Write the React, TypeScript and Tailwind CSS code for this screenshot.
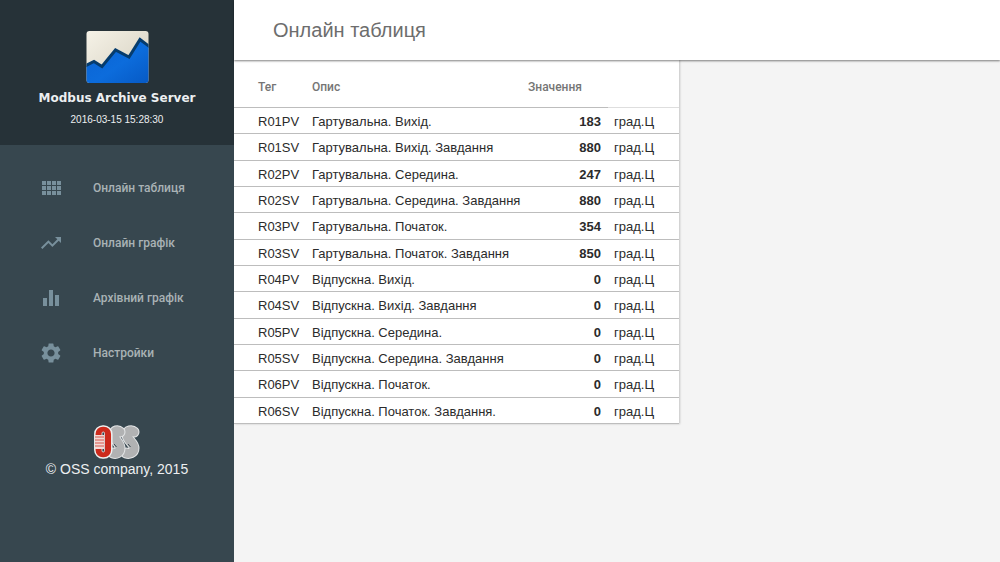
import React, { useState } from "react";
import { MdEqualizer, MdSettings, MdTrendingUp } from "react-icons/md";

interface ITag {
  tag: string;
  description: string;
  value: number;
}

const UNIT = "град.Ц";

const tags: ITag[] = [
  { tag: "R01PV", description: "Гартувальна. Вихід.", value: 183 },
  { tag: "R01SV", description: "Гартувальна. Вихід. Завдання", value: 880 },
  { tag: "R02PV", description: "Гартувальна. Середина.", value: 247 },
  { tag: "R02SV", description: "Гартувальна. Середина. Завдання", value: 880 },
  { tag: "R03PV", description: "Гартувальна. Початок.", value: 354 },
  { tag: "R03SV", description: "Гартувальна. Початок. Завдання", value: 850 },
  { tag: "R04PV", description: "Відпускна. Вихід.", value: 0 },
  { tag: "R04SV", description: "Відпускна. Вихід. Завдання", value: 0 },
  { tag: "R05PV", description: "Відпускна. Середина.", value: 0 },
  { tag: "R05SV", description: "Відпускна. Середина. Завдання", value: 0 },
  { tag: "R06PV", description: "Відпускна. Початок.", value: 0 },
  { tag: "R06SV", description: "Відпускна. Початок. Завдання.", value: 0 },
];

const GridIcon = () => (
  <svg viewBox="0 0 24 24" width="24" height="24" fill="currentColor">
    <path d="M3 9h4V5H3v4zm0 5h4v-4H3v4zm5 0h4v-4H8v4zm5 0h4v-4h-4v4zM8 9h4V5H8v4zm5-4v4h4V5h-4zm5 9h4v-4h-4v4zM3 19h4v-4H3v4zm5 0h4v-4H8v4zm5 0h4v-4h-4v4zm5 0h4v-4h-4v4zm0-14v4h4V5h-4z" />
  </svg>
);

const menu = [
  { id: "table", label: "Онлайн таблиця", icon: <GridIcon /> },
  { id: "chart", label: "Онлайн графік", icon: <MdTrendingUp size={24} /> },
  { id: "archive", label: "Архівний графік", icon: <MdEqualizer size={24} /> },
  { id: "settings", label: "Настройки", icon: <MdSettings size={24} /> },
];

const ServerLogo = () => (
  <svg viewBox="0 0 63 54" width="63" height="54" aria-hidden="true">
    <defs>
      <linearGradient id="paper" x1="0" y1="0" x2="1" y2="1">
        <stop offset="0" stopColor="#f6f3e8" />
        <stop offset="1" stopColor="#d3cdbd" />
      </linearGradient>
      <linearGradient id="area" x1="0" y1="0" x2="1" y2="1">
        <stop offset="0" stopColor="#0a62d2" />
        <stop offset="0.55" stopColor="#0c6cdc" />
        <stop offset="1" stopColor="#0659c4" />
      </linearGradient>
      <clipPath id="frame">
        <rect x="0.5" y="1" width="62" height="52" rx="3" />
      </clipPath>
    </defs>
    <g clipPath="url(#frame)">
      <rect width="63" height="54" fill="url(#paper)" />
      <path d="M0 36L8 32L16 36.5L29.5 20L43 27L54 10L63 17V54H0z" fill="url(#area)" />
      <path d="M-1 36L8 31.5L16 36.5L29.5 20L43 27L54 9.5L64 17" fill="none" stroke="#063c6d" strokeWidth="3" />
    </g>
  </svg>
);

const CompanyLogo = () => (
  <svg viewBox="0 0 46 34" width="46" height="34" fill="none" aria-hidden="true">
    {/* Grey letters, right one first, each with a light rim */}
    <path d="M40 7C38 5 33 5 33 10C33 15 40 18 40 23C40 28 35 29 32 28" stroke="#e4e6e7" strokeWidth="11" strokeLinecap="round" />
    <path d="M40 7C38 5 33 5 33 10C33 15 40 18 40 23C40 28 35 29 32 28" stroke="#b1b2b3" strokeWidth="9" strokeLinecap="round" />
    <path d="M26 7C24 5 20 5 20 10C20 15 26 18 26 23C26 28 22 29 19 28" stroke="#e4e6e7" strokeWidth="11" strokeLinecap="round" />
    <path d="M26 7C24 5 20 5 20 10C20 15 26 18 26 23C26 28 22 29 19 28" stroke="#b1b2b3" strokeWidth="9" strokeLinecap="round" />
    <path d="M20 19l2.5 3M34 19l2.5 3" stroke="#37474f" strokeWidth="1" />
    <rect x="0.8" y="1" width="17" height="32" rx="8" fill="#cc2a1c" stroke="#eef0f0" strokeWidth="1.5" />
    <rect x="8" y="7" width="2.5" height="20" rx="1.2" fill="#37474f" stroke="#eef0f0" strokeWidth="0.8" />
    <rect x="1" y="10" width="9" height="14" fill="#f3d9d6" />
    <path d="M1 12h9M1 15h9M1 18h9M1 21h9" stroke="#d4574c" />
  </svg>
);

const App = () => {
  const [active, setActive] = useState("table");

  return (
    <div className="flex min-h-screen bg-[#f4f4f4] font-['Liberation_Sans',Arial,sans-serif]">
      {/* Sidebar */}
      <aside className="flex w-[234px] shrink-0 flex-col bg-[#37474f]">
        <div className="flex h-[145px] flex-col items-center bg-[#263238] pt-[30px] text-[#eceff1]">
          <ServerLogo />
          <h2 className="mt-1 text-[12px] leading-5 font-bold font-['DejaVu_Sans',sans-serif]">
            Modbus Archive Server
          </h2>
          <time className="mt-1 text-[10px] leading-4">2016-03-15 15:28:30</time>
        </div>

        <nav className="flex flex-col gap-[15px] pt-[23px]">
          {menu.map(({ id, label, icon }) => (
            <a
              key={id}
              href={`#${id}`}
              onClick={() => setActive(id)}
              aria-current={active === id ? "page" : undefined}
              className="flex h-10 items-center gap-[30px] pl-[39px] text-[12px] font-medium text-[#a9b2b5] font-['Roboto',sans-serif] hover:text-white"
            >
              <span className="text-[#78909c]">{icon}</span>
              {label}
            </a>
          ))}
        </nav>

        <div className="mt-[52px] flex flex-col items-center text-[14px] leading-5 text-[#eceff1]">
          <CompanyLogo />
          <p>© OSS company, 2015</p>
        </div>
      </aside>

      {/* Page */}
      <div className="flex min-w-0 flex-1 flex-col items-start">
        <header className="z-10 flex h-[60px] w-full items-center bg-white pl-[39px] shadow-[0_1px_2px_rgba(0,0,0,0.5)]">
          <h1 className="text-[20px] leading-6 text-[#6d6d6d]">Онлайн таблиця</h1>
        </header>

        <table className="h-[364px] w-[445px] table-fixed border-separate border-spacing-0 bg-white text-left text-[13px] leading-4 text-[#2b2b2b] shadow-[1px_0_2px_rgba(0,0,0,0.2)]">
          <colgroup>
            <col className="w-[78px]" />
            <col className="w-[202px]" />
            <col className="w-[94px]" />
            <col />
          </colgroup>
          <thead>
            <tr className="h-12 text-[12px] text-[#757575] font-['Roboto',sans-serif]">
              <th className="border-b border-[#bdbdbd] pt-[7px] pl-6 font-medium">Тег</th>
              <th className="border-b border-[#bdbdbd] pt-[7px] font-medium">Опис</th>
              <th className="border-b border-[#bdbdbd] pt-[7px] pl-[14px] font-medium">Значення</th>
              <th className="border-b border-[#dedede]" />
            </tr>
          </thead>
          <tbody>
            {tags.map(({ tag, description, value }) => (
              <tr key={tag}>
                <td className="border-b border-[#bdbdbd] pt-[6px] pb-[3px] pl-6">{tag}</td>
                <td className="border-b border-[#bdbdbd] pt-[6px] pb-[3px] whitespace-nowrap">{description}</td>
                <td className="border-b border-[#bdbdbd] pt-[6px] pr-[7px] pb-[3px] text-right font-bold">{value}</td>
                <td className="border-b border-[#bdbdbd] pt-[6px] pb-[3px] pl-[6px]">{UNIT}</td>
              </tr>
            ))}
          </tbody>
        </table>
      </div>
    </div>
  );
};

export default App;
